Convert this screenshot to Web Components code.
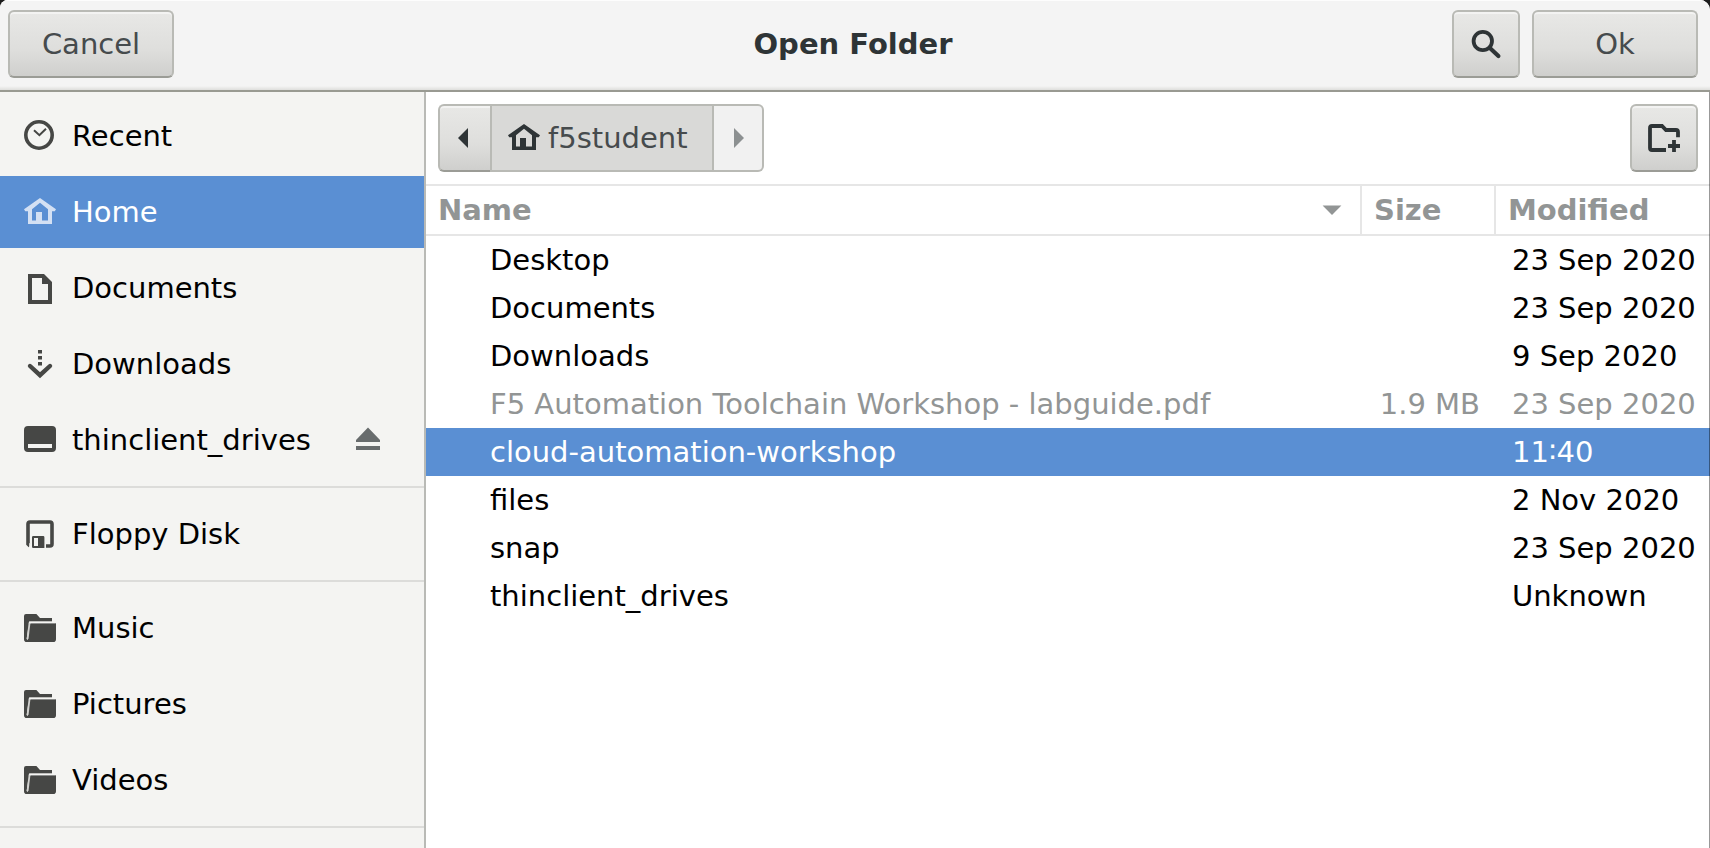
<!DOCTYPE html>
<html lang="en">
<head>
<meta charset="utf-8">
<meta name="viewport" content="width=device-width, initial-scale=1">
<title>Open Folder</title>
<style>
  html { background: #1c1c1c; }
  body {
    margin: 0;
    font: 29px/34px "DejaVu Sans", Verdana, sans-serif;
    color: #000;
    --select: #5a8fd3;
    --ink: #2e3436;
    --line: #e6e6e6;
  }
</style>
</head>
<body>
<folder-dialog></folder-dialog>

<script>
const define = (name, html, setup) => {
  const template = document.createElement('template');
  template.innerHTML = html;
  customElements.define(name, class extends HTMLElement {
    constructor() {
      super();
      this.attachShadow({ mode: 'open' }).append(template.content.cloneNode(true));
    }
    connectedCallback() { if (setup) setup(this, this.shadowRoot); }
  });
};

/* Symbolic icons on a 16-unit grid, painted with currentColor. */
const ICONS = {
  recent: '<circle cx="7.5" cy="7.5" r="6.6" fill="none" stroke="currentColor" stroke-width="1.8"/><path d="M5 5.1 7.7 7.6 11 4.4" fill="none" stroke="currentColor" stroke-width="1"/>',
  home: '<path fill-rule="evenodd" d="M8 1 16 6.6 15.4 7.6H14V14H2V7.6H.6L0 6.6ZM8 3.4 4 6.6V12.2H6V8H9V12.2H12V6.6Z"/>',
  document: '<path fill-rule="evenodd" d="M2 1H10L14 5V16H2ZM4 3V14H12V6H9V3Z"/>',
  download: '<path d="M7 1H9V2.7H7ZM7 4H9V5.7H7ZM7 7H9V8.7H7Z"/><path d="M3 9 8 13.6 13 9" fill="none" stroke="currentColor" stroke-width="2.2" stroke-linecap="round"/>',
  drive: '<path fill-rule="evenodd" d="M2 1H14A2 2 0 0 1 16 3V12A2 2 0 0 1 14 14H2A2 2 0 0 1 0 12V3A2 2 0 0 1 2 1ZM2 10V12H14V10Z"/>',
  floppy: '<path d="M3 14 2 13V3A1 1 0 0 1 3 2H13A1 1 0 0 1 14 3V13A1 1 0 0 1 13 14H11" fill="none" stroke="currentColor" stroke-width="1.8"/><path fill-rule="evenodd" d="M4.6 9H9.6Q10.2 9 10.2 9.6V15H4.6Q4 15 4 14.4V9.6Q4 9 4.6 9ZM5 10V14H7V10Z"/><path d="M2.6 12.6H4V15H2.6Z" fill="#f4f4f2"/>',
  folder: '<path d="M1 1H6.2L8 3H14V4.8H2.6L1.3 13.5 2 14V6H3L3.2 5.6H16V13.6A1.4 1.4 0 0 1 14.6 15H1.4A1.4 1.4 0 0 1 0 13.6V2A1 1 0 0 1 1 1Z"/><path d="M1.8 13.4 2.8 5.2" stroke="#d2d2d0" stroke-width=".9"/><path d="M2.6 5.2H15.8" stroke="#f4f4f2" stroke-width=".8"/>',
  eject: '<path d="M8 1.8 14 8V9H2V8ZM2 11H14V13H2Z"/>',
  search: '<circle cx="6.4" cy="6.5" r="4.6" fill="none" stroke="currentColor" stroke-width="1.9"/><path d="M9.8 9.9 14.2 14" stroke="currentColor" stroke-width="2.1" stroke-linecap="round"/>',
  newfolder: '<path d="M9 14H2A1 1 0 0 1 1 13V3A1 1 0 0 1 2 2H7L9 4H14A1 1 0 0 1 15 5V7.6" fill="none" stroke="currentColor" stroke-width="1.9"/><path d="M13 9V15M10 12H16" stroke="currentColor" stroke-width="1.9"/>',
  left: '<path d="M10 3V13L5 8Z"/>',
  right: '<path d="M6 3V13L11 8Z"/>',
  sort: '<path d="M3.3 5.8H12.7L8 10.5Z"/>'
};

define('sym-icon', `
  <style>
    :host { display: block; flex: none; width: 32px; height: 32px; }
    svg { display: block; width: 100%; height: 100%; }
  </style>
  <svg viewBox="0 0 16 16" fill="currentColor" aria-hidden="true"></svg>`,
  (el, root) => { root.querySelector('svg').innerHTML = ICONS[el.getAttribute('name')] || ''; });

define('tool-button', `
  <style>
    :host { display: block; width: 166px; }
    :host([icon]) { width: 68px; }
    button {
      box-sizing: border-box; width: 100%; height: 68px; padding: 0;
      display: flex; align-items: center; justify-content: center;
      font: inherit; color: #464b4d;
      border: 2px solid #b9bab5; border-bottom-color: #9b9c96; border-radius: 6px;
      background: linear-gradient(#e8e8e6, #dededc 60%, #cfcfcd);
      box-shadow: inset 0 2px #f3f3f2;
    }
    :host([icon]) button { color: var(--ink); }
  </style>
  <button type="button"><slot></slot></button>`,
  (el, root) => {
    if (el.hasAttribute('label')) root.querySelector('button').setAttribute('aria-label', el.getAttribute('label'));
  });

define('header-bar', `
  <style>
    :host {
      display: grid; grid-template-columns: 1fr auto 1fr; align-items: center;
      box-sizing: border-box; height: 92px; padding: 0 12px 2px 8px;
      border-bottom: 2px solid #999a92;
      background: linear-gradient(#f4f4f4 86px, #dededc 90px);
      box-shadow: inset 0 1px #fdfdfd;
    }
    h1 { margin: 0; font: inherit; font-weight: bold; color: var(--ink); }
    .end { display: flex; justify-content: flex-end; gap: 12px; }
  </style>
  <slot name="start"></slot>
  <h1><slot></slot></h1>
  <div class="end"><slot name="end"></slot></div>`);

define('place-item', `
  <style>
    :host { display: flex; align-items: center; height: 72px; color: #000; }
    :host([current]) { background: var(--select); color: #fff; }
    a {
      flex: 1; display: flex; align-items: center; gap: 16px; height: 100%;
      padding-left: 24px; color: inherit; text-decoration: none;
    }
    sym-icon { color: #464745; }
    :host([current]) sym-icon { color: #d3e0f3; }
    button {
      display: none; width: 32px; height: 32px; padding: 0; margin-right: 40px;
      border: 0; background: none;
    }
    button sym-icon { color: #686c6d; }
    :host([ejectable]) button { display: block; }
  </style>
  <a href="#"><sym-icon></sym-icon><span><slot></slot></span></a>
  <button type="button" aria-label="Eject"><sym-icon name="eject"></sym-icon></button>`,
  (el, root) => {
    const icon = document.createElement('sym-icon');
    icon.setAttribute('name', el.getAttribute('icon'));
    root.querySelector('a sym-icon').replaceWith(icon);
  });

define('places-sidebar', `
  <style>
    :host {
      display: block; box-sizing: border-box; width: 426px; overflow: hidden auto;
      border-right: 2px solid #b9bab6; background: #f4f4f2;
    }
    nav { display: flex; flex-direction: column; gap: 4px; padding: 8px 0; }
    hr { width: 100%; height: 2px; margin: 6px 0; border: 0; background: #dcdcda; }
  </style>
  <nav aria-label="Places">
    <place-item icon="recent">Recent</place-item>
    <place-item icon="home" current>Home</place-item>
    <place-item icon="document">Documents</place-item>
    <place-item icon="download">Downloads</place-item>
    <place-item icon="drive" ejectable>thinclient_drives</place-item>
    <hr>
    <place-item icon="floppy">Floppy Disk</place-item>
    <hr>
    <place-item icon="folder">Music</place-item>
    <place-item icon="folder">Pictures</place-item>
    <place-item icon="folder">Videos</place-item>
    <hr>
  </nav>`);

define('path-bar', `
  <style>
    :host { display: flex; }
    button {
      box-sizing: border-box; height: 68px; margin: 0; padding: 0 8px;
      display: flex; align-items: center; gap: 8px;
      font: inherit; color: #464b4d; border: 2px solid #b9bab5; background: #d9d9d7;
    }
    button sym-icon { color: var(--ink); }
    .back {
      width: 52px; border-right: 0; border-bottom-color: #9b9c96; border-radius: 6px 0 0 6px;
      background: linear-gradient(#e8e8e6, #dededc 60%, #cfcfcd);
      box-shadow: inset 0 2px #f3f3f2;
    }
    .here { width: 224px; padding: 0 16px; }
    .next { width: 50px; border-left: 0; border-radius: 0 6px 6px 0; background: #f1f1f1; }
    .next sym-icon { color: #8c9091; }
  </style>
  <button type="button" class="back" aria-label="Back"><sym-icon name="left"></sym-icon></button>
  <button type="button" class="here"><sym-icon name="home"></sym-icon><span><slot></slot></span></button>
  <button type="button" class="next" aria-label="Forward" disabled><sym-icon name="right"></sym-icon></button>`);

define('file-list', `
  <style>
    :host { display: block; }
    table { width: 100%; border-collapse: separate; border-spacing: 0; table-layout: fixed; }
    .size { width: 134px; }
    .date { width: 214px; }
    th {
      height: 48px; padding: 0; text-align: left;
      border: solid var(--line); border-width: 2px 2px 2px 0;
    }
    th:last-child { border-right: 0; }
    th button {
      display: flex; align-items: center; justify-content: space-between;
      width: 100%; height: 48px; padding: 0 12px;
      font: inherit; font-weight: bold; color: #929595; border: 0; background: none;
    }
    td { height: 48px; padding: 0; white-space: nowrap; }
    td:nth-child(1) { padding-left: 64px; }
    td:nth-child(2) { padding-right: 16px; text-align: right; }
    td:nth-child(3) { padding-left: 16px; }
    .dim { color: #929595; }
    .selected { color: #fff; background: var(--select); }
  </style>
  <table>
    <colgroup><col><col class="size"><col class="date"></colgroup>
    <thead><tr>
      <th aria-sort="ascending"><button type="button">Name<sym-icon name="sort"></sym-icon></button></th>
      <th><button type="button">Size</button></th>
      <th><button type="button">Modified</button></th>
    </tr></thead>
    <tbody>
      <tr><td>Desktop</td><td></td><td>23 Sep 2020</td></tr>
      <tr><td>Documents</td><td></td><td>23 Sep 2020</td></tr>
      <tr><td>Downloads</td><td></td><td>9 Sep 2020</td></tr>
      <tr class="dim"><td>F5 Automation Toolchain Workshop - labguide.pdf</td><td>1.9 MB</td><td>23 Sep 2020</td></tr>
      <tr class="selected"><td>cloud-automation-workshop</td><td></td><td>11∶40</td></tr>
      <tr><td>files</td><td></td><td>2 Nov 2020</td></tr>
      <tr><td>snap</td><td></td><td>23 Sep 2020</td></tr>
      <tr><td>thinclient_drives</td><td></td><td>Unknown</td></tr>
    </tbody>
  </table>`);

define('folder-dialog', `
  <style>
    :host {
      display: grid; grid-template: auto minmax(0, 1fr) / auto minmax(0, 1fr);
      position: relative; height: 100vh; overflow: hidden;
      border-radius: 8px 10px 0 0; background: #fff;
    }
    :host::after {
      content: ""; position: absolute; inset: 92px 0 0 auto; width: 1px;
      background: rgba(0, 0, 0, .4);
    }
    header-bar { grid-column: 1 / -1; }
    .tools { display: flex; justify-content: space-between; padding: 12px; }
  </style>
  <header-bar>
    <tool-button slot="start">Cancel</tool-button>
    Open Folder
    <tool-button slot="end" icon label="Search"><sym-icon name="search"></sym-icon></tool-button>
    <tool-button slot="end">Ok</tool-button>
  </header-bar>
  <places-sidebar></places-sidebar>
  <main>
    <div class="tools">
      <path-bar>f5student</path-bar>
      <tool-button icon label="Create Folder"><sym-icon name="newfolder"></sym-icon></tool-button>
    </div>
    <file-list></file-list>
  </main>`);
</script>
</body>
</html>
